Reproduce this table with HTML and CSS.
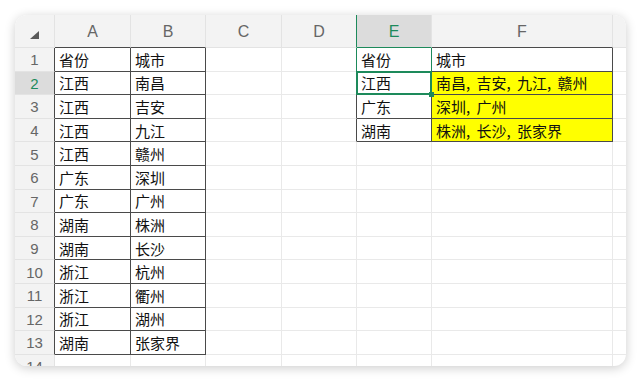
FILE: index.html
```html
<!DOCTYPE html>
<html lang="zh">
<head>
<meta charset="utf-8">
<title>Sheet</title>
<link rel="stylesheet" href="styles.css">
</head>
<body>
<div class="window">
  <div class="sheet">
    <div class="cell col corner"><svg width="9" height="8" viewBox="0 0 9 8"><polygon points="9,0 9,8 0,8" fill="#5a5a5a"/></svg></div>
    <div class="cell col db">A</div>
    <div class="cell col db">B</div>
    <div class="cell col">C</div>
    <div class="cell col gr">D</div>
    <div class="cell col sel gb">E</div>
    <div class="cell col db">F</div>
    <div class="cell col"></div>

    <div class="cell row dr">1</div>
    <div class="cell dr db">省份</div>
    <div class="cell dr db">城市</div>
    <div class="cell"></div>
    <div class="cell gr"></div>
    <div class="cell gr">省份</div>
    <div class="cell dr db">城市</div>
    <div class="cell"></div>

    <div class="cell row sel dr">2</div>
    <div class="cell dr db">江西</div>
    <div class="cell dr db">南昌</div>
    <div class="cell"></div>
    <div class="cell"></div>
    <div class="cell active dr db">江西</div>
    <div class="cell dr db yel">南昌, 吉安, 九江, 赣州</div>
    <div class="cell"></div>

    <div class="cell row dr">3</div>
    <div class="cell dr db">江西</div>
    <div class="cell dr db">吉安</div>
    <div class="cell"></div>
    <div class="cell dr"></div>
    <div class="cell dr db">广东</div>
    <div class="cell dr db yel">深圳, 广州</div>
    <div class="cell"></div>

    <div class="cell row dr">4</div>
    <div class="cell dr db">江西</div>
    <div class="cell dr db">九江</div>
    <div class="cell"></div>
    <div class="cell dr"></div>
    <div class="cell dr db">湖南</div>
    <div class="cell dr db yel">株洲, 长沙, 张家界</div>
    <div class="cell"></div>

    <div class="cell row dr">5</div>
    <div class="cell dr db">江西</div>
    <div class="cell dr db">赣州</div>
    <div class="cell"></div><div class="cell"></div><div class="cell"></div><div class="cell"></div><div class="cell"></div>

    <div class="cell row dr">6</div>
    <div class="cell dr db">广东</div>
    <div class="cell dr db">深圳</div>
    <div class="cell"></div><div class="cell"></div><div class="cell"></div><div class="cell"></div><div class="cell"></div>

    <div class="cell row dr">7</div>
    <div class="cell dr db">广东</div>
    <div class="cell dr db">广州</div>
    <div class="cell"></div><div class="cell"></div><div class="cell"></div><div class="cell"></div><div class="cell"></div>

    <div class="cell row dr">8</div>
    <div class="cell dr db">湖南</div>
    <div class="cell dr db">株洲</div>
    <div class="cell"></div><div class="cell"></div><div class="cell"></div><div class="cell"></div><div class="cell"></div>

    <div class="cell row dr">9</div>
    <div class="cell dr db">湖南</div>
    <div class="cell dr db">长沙</div>
    <div class="cell"></div><div class="cell"></div><div class="cell"></div><div class="cell"></div><div class="cell"></div>

    <div class="cell row dr">10</div>
    <div class="cell dr db">浙江</div>
    <div class="cell dr db">杭州</div>
    <div class="cell"></div><div class="cell"></div><div class="cell"></div><div class="cell"></div><div class="cell"></div>

    <div class="cell row dr">11</div>
    <div class="cell dr db">浙江</div>
    <div class="cell dr db">衢州</div>
    <div class="cell"></div><div class="cell"></div><div class="cell"></div><div class="cell"></div><div class="cell"></div>

    <div class="cell row dr">12</div>
    <div class="cell dr db">浙江</div>
    <div class="cell dr db">湖州</div>
    <div class="cell"></div><div class="cell"></div><div class="cell"></div><div class="cell"></div><div class="cell"></div>

    <div class="cell row dr">13</div>
    <div class="cell dr db">湖南</div>
    <div class="cell dr db">张家界</div>
    <div class="cell"></div><div class="cell"></div><div class="cell"></div><div class="cell"></div><div class="cell"></div>

    <div class="cell row">14</div>
    <div class="cell"></div><div class="cell"></div><div class="cell"></div><div class="cell"></div><div class="cell"></div><div class="cell"></div><div class="cell"></div>
  </div>
</div>
</body>
</html>
```

FILE: styles.css
```css
* {
  box-sizing: border-box;
  margin: 0;
  padding: 0;
}

html, body {
  background: #ffffff;
}

body {
  padding: 15px 14px 15px 15px;
  font-family: "Liberation Sans", Arial, sans-serif;
}

.window {
  width: 611px;
  height: 351px;
  border-radius: 12px;
  overflow: hidden;
  background: #ffffff;
  box-shadow: 0 2px 11px rgba(0, 0, 0, 0.2);
}

.sheet {
  display: grid;
  grid-template-columns: 40px 76px 75px 76px 75px 75px 181px 40px;
  grid-template-rows: 33px repeat(14, 23.6px);
}

.cell {
  display: flex;
  align-items: center;
  padding-left: 4px;
  border-right: 1px solid #e9e9e9;
  border-bottom: 1px solid #e9e9e9;
  font-family: "Noto Sans CJK SC", "Liberation Sans", sans-serif;
  font-size: 15px;
  color: #111111;
  white-space: nowrap;
  overflow: hidden;
}

.col {
  justify-content: center;
  padding: 2px 0 0 0;
  background: #f3f3f3;
  border-color: #e3e3e3;
  font-family: "Liberation Sans", Arial, sans-serif;
  font-size: 16px;
  color: #666666;
}

.corner {
  justify-content: flex-start;
  align-items: flex-start;
  padding: 16px 0 0 15px;
}

.row {
  justify-content: center;
  padding: 1px 0 0 0;
  background: #f3f3f3;
  border-color: #e3e3e3;
  font-family: "Liberation Sans", Arial, sans-serif;
  font-size: 15px;
  color: #666666;
}

.sel {
  background: #dcdcdc;
  color: #1d8a5b;
}

.dr {
  border-right-color: #4a4a4a;
}

.db {
  border-bottom-color: #4a4a4a;
}

.gr {
  border-right-color: #1d8a5b;
}

.gb {
  border-bottom-color: #1d8a5b;
}

.yel {
  background: #ffff00;
  word-spacing: 3px;
}

.active {
  position: relative;
  overflow: visible;
}

.active::after {
  content: "";
  position: absolute;
  left: -1px;
  top: -1px;
  right: -1px;
  bottom: -1px;
  border: 2px solid #1d8a5b;
  z-index: 1;
}

.active::before {
  content: "";
  position: absolute;
  right: -3px;
  bottom: -3px;
  width: 5px;
  height: 5px;
  background: #1d8a5b;
  z-index: 2;
}
```
